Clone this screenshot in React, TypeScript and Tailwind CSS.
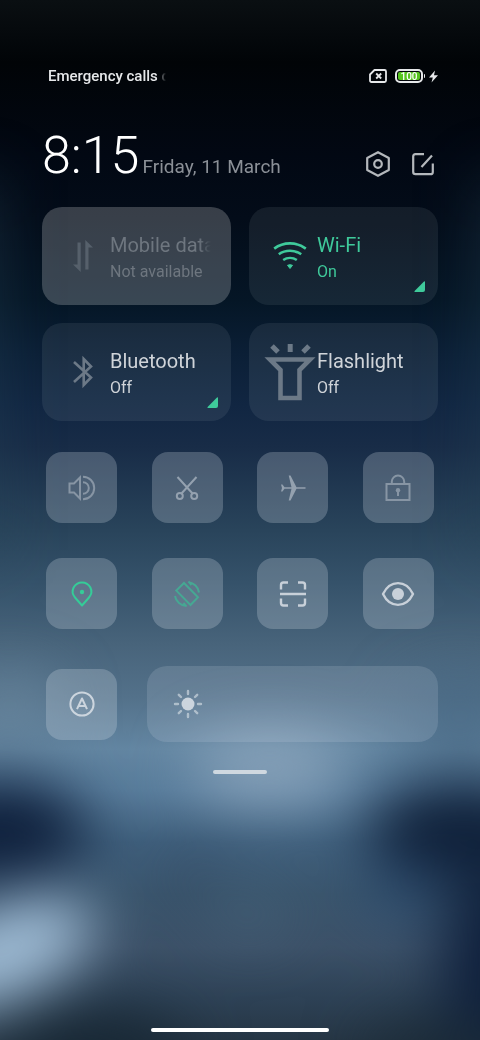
import type { ReactNode } from 'react';

function Wallpaper() {
  return (
    <svg
      className="absolute inset-0 -z-10 size-full"
      viewBox="0 0 480 1040"
      preserveAspectRatio="none"
      aria-hidden="true"
    >
      <defs>
        <linearGradient id="sky" x1="0" y1="0" x2="0" y2="1">
          <stop offset="0" stopColor="#0a0f12" />
          <stop offset="0.06" stopColor="#010407" />
          <stop offset="0.15" stopColor="#020813" />
          <stop offset="0.21" stopColor="#030c19" />
          <stop offset="0.29" stopColor="#051626" />
          <stop offset="0.34" stopColor="#0b1f36" />
          <stop offset="0.39" stopColor="#112642" />
          <stop offset="0.43" stopColor="#182c47" />
          <stop offset="0.51" stopColor="#29445b" />
          <stop offset="0.56" stopColor="#35526a" />
          <stop offset="0.62" stopColor="#48647b" />
          <stop offset="0.67" stopColor="#53718a" />
          <stop offset="0.72" stopColor="#6386a2" />
          <stop offset="0.76" stopColor="#587c9b" />
          <stop offset="0.81" stopColor="#3f5f7c" />
          <stop offset="0.86" stopColor="#3a556d" />
          <stop offset="0.91" stopColor="#3c5168" />
          <stop offset="0.96" stopColor="#2e4256" />
          <stop offset="1" stopColor="#263645" />
        </linearGradient>
        <filter id="soft" x="-100%" y="-100%" width="300%" height="300%" colorInterpolationFilters="sRGB">
          <feGaussianBlur stdDeviation="30" />
        </filter>
      </defs>
      <rect width="480" height="1040" fill="url(#sky)" />
      <g filter="url(#soft)">
        <rect x="-60" y="180" width="60" height="370" fill="#264558" opacity="0.45" />
        <rect x="480" y="180" width="60" height="370" fill="#264558" opacity="0.45" />
        <ellipse cx="10" cy="705" rx="50" ry="35" fill="#718ea3" opacity="0.6" />
        <ellipse cx="270" cy="768" rx="80" ry="36" fill="#98afc4" opacity="0.75" />
        <ellipse cx="460" cy="715" rx="60" ry="40" fill="#426480" opacity="0.6" />
        <ellipse cx="-5" cy="832" rx="92" ry="52" fill="#0e1f3b" />
        <ellipse cx="465" cy="832" rx="96" ry="50" fill="#0f2039" />
        <ellipse cx="500" cy="960" rx="60" ry="85" fill="#0f203c" />
        <ellipse cx="400" cy="895" rx="34" ry="26" fill="#2c4d74" opacity="0.8" />
        <ellipse cx="190" cy="875" rx="22" ry="20" fill="#2f4056" opacity="0.6" />
        <ellipse cx="250" cy="915" rx="40" ry="20" fill="#4a687d" opacity="0.6" />
        <ellipse cx="90" cy="1050" rx="100" ry="35" fill="#162633" />
        <ellipse cx="450" cy="1050" rx="90" ry="24" fill="#182835" />
        <ellipse cx="5" cy="952" rx="94" ry="46" fill="#a0bdd6" transform="rotate(-24 5 952)" />
      </g>
    </svg>
  );
}

function MobileDataIcon() {
  return (
    <svg width="20" height="32" viewBox="0 0 20 32" fill="currentColor" aria-hidden="true">
      <path d="M4.500 2.500h3.200V32L0 24.500h4.500zM15.500 29.500h-3.200V0L20 7.500h-4.500z" />
    </svg>
  );
}

function WifiIcon() {
  return (
    <svg width="34" height="30" viewBox="0 0 34 30" fill="none" stroke="currentColor" strokeWidth="2.600" aria-hidden="true">
      <path d="M1.200 7.600C10.500.6 23.500.6 32.800 7.600M5.800 13.300c6.600-4.700 15.800-4.700 22.400 0M10.200 19c4-2.600 9.600-2.600 13.600 0" />
      <path d="M14.500 24.300q2.500-1.300 5 0L17 27.500z" fill="currentColor" strokeWidth="1" />
    </svg>
  );
}

function BluetoothIcon() {
  return (
    <svg width="20" height="34" viewBox="0 0 20 34" fill="none" stroke="currentColor" strokeWidth="2.600" aria-hidden="true">
      <path d="M1 7l17 15.500-7.300 7.500V4L18 11.500 1 27" />
    </svg>
  );
}

function FlashlightIcon() {
  return (
    <svg width="52" height="58" viewBox="0 0 52 58" fill="none" stroke="currentColor" strokeWidth="4.600" aria-hidden="true">
      <path d="M6 16.500h40L35.500 27v28h-19V27z" />
      <path d="M26.200 1v8M8 3l6 6M45 3l-6 6" strokeWidth="5" />
    </svg>
  );
}

type TileProps = {
  title: string;
  status: string;
  icon: ReactNode;
  iconColor: string;
  textColor: string;
  background: string;
  expandable?: boolean;
  disabled?: boolean;
};

function Tile({ title, status, icon, iconColor, textColor, background, expandable, disabled }: TileProps) {
  return (
    <button
      type="button"
      disabled={disabled}
      className={`relative flex h-[98px] min-w-0 items-center rounded-[20px] pr-5 pl-[14px] text-left ${background}`}
    >
      <span className={`flex w-[54px] shrink-0 justify-center ${iconColor}`}>{icon}</span>
      <span className={`min-w-0 flex-1 pt-1 ${textColor}`}>
        <span className="block overflow-hidden text-xl leading-7 whitespace-nowrap [mask-image:linear-gradient(to_right,#000_88%,transparent)]">
          {title}
        </span>
        <span className="block text-base leading-[26px] whitespace-nowrap">{status}</span>
      </span>
      {expandable && (
        <svg className="absolute right-[13px] bottom-[13px] text-[#3fca9b]" width="11" height="11" viewBox="0 0 11 11" aria-hidden="true">
          <path d="M10 .4Q11 0 11 1v8q0 2-2 2H1q-1 0-.4-1z" fill="currentColor" />
        </svg>
      )}
    </button>
  );
}

function Toggle({ label, color, children }: { label: string; color: string; children: ReactNode }) {
  return (
    <button
      type="button"
      aria-label={label}
      className={`flex size-[71px] shrink-0 items-center justify-center rounded-2xl bg-[#dfe6f0]/24 ${color}`}
    >
      <svg width="34" height="34" viewBox="0 0 34 34" fill="none" stroke="currentColor" strokeWidth="2" aria-hidden="true">
        {children}
      </svg>
    </button>
  );
}

export default function App() {
  return (
    <main className="relative isolate flex min-h-screen flex-col overflow-hidden px-[42px] pt-16 font-[Roboto,sans-serif]">
      <Wallpaper />

      <header>
        <div className="flex h-6 items-center justify-between pl-[6px]">
          <span className="w-[118px] overflow-hidden text-[15px] leading-[26px] font-medium whitespace-nowrap text-[#e6e8ea] [mask-image:linear-gradient(to_right,#000_92%,transparent)]">
            Emergency calls only
          </span>
          <div className="flex items-center gap-2 text-[#e6e8ea]">
            <svg width="18" height="14" viewBox="0 0 18 14" fill="none" stroke="currentColor" strokeWidth="1.800" aria-label="No SIM card">
              <path d="M5.500 1H15.500Q17 1 17 2.500v9q0 1.500-1.500 1.500h-13Q1 13 1 11.500V5.500z" strokeLinejoin="round" />
              <path d="M7.200 4.500l5 5M12.200 4.500l-5 5" strokeWidth="1.800" />
            </svg>
            <div className="flex items-center">
              <div className="rounded-[5px] border-2 border-[#e6e8ea] p-px">
                <div className="h-2 w-[22px] rounded-xs bg-[#55c31e] text-center text-[10px] leading-[9px] font-medium text-white">100</div>
              </div>
              <div className="ml-px h-1 w-px rounded-r bg-[#e6e8ea]" />
              <svg className="ml-1" width="9" height="13" viewBox="0 0 9 12" fill="currentColor" aria-label="Charging">
                <path d="M6 0L0 6.900h3.800L2.500 12 9 4.800H5z" />
              </svg>
            </div>
          </div>
        </div>

        <div className="mt-[38px] flex h-[60px] items-end justify-between">
          <div className="flex items-baseline gap-[3px]">
            <time className="text-[52px] leading-[60px] font-light text-white">8:15</time>
            <span className="text-[19px] whitespace-nowrap text-[#8b9097]">Friday, 11 March</span>
          </div>
          <div className="flex items-center gap-[18px] pb-2 text-[#b4b8bc]">
            <button type="button" aria-label="Settings">
              <svg width="28" height="28" viewBox="0 0 28 28" fill="none" stroke="currentColor" strokeWidth="2.200" strokeLinejoin="round" aria-hidden="true">
                <path d="M14 2.200L24.800 8v12L14 25.800 3.200 20V8z" />
                <circle cx="14" cy="14" r="3.800" />
              </svg>
            </button>
            <button type="button" aria-label="Edit">
              <svg width="28" height="28" viewBox="0 0 28 28" fill="none" stroke="currentColor" strokeWidth="2.200" aria-hidden="true">
                <path d="M14 4.200H5.500Q3.200 4.200 3.200 6.500v15.500Q3.200 24.200 5.500 24.200h15q2.300 0 2.300-2.300V13.500M22 5.500L11.500 17" />
              </svg>
            </button>
          </div>
        </div>
      </header>

      <section aria-label="Connections" className="mt-[21px] grid grid-cols-2 gap-[18px]">
        <Tile
          title="Mobile data"
          status="Not available"
          icon={<MobileDataIcon />}
          iconColor="text-[#56606b]"
          textColor="text-[#6e767f]"
          background="bg-white/21"
          disabled
        />
        <Tile
          title="Wi-Fi"
          status="On"
          icon={<WifiIcon />}
          iconColor="text-[#3fca9b]"
          textColor="text-[#3fca9b]"
          background="bg-[#eaf2f6]/8"
          expandable
        />
        <Tile
          title="Bluetooth"
          status="Off"
          icon={<BluetoothIcon />}
          iconColor="text-[#6c7987]"
          textColor="text-[#d0d4d9]"
          background="bg-[#eaf2f6]/8"
          expandable
        />
        <Tile
          title="Flashlight"
          status="Off"
          icon={<FlashlightIcon />}
          iconColor="text-[#6c7987]"
          textColor="text-[#d0d4d9]"
          background="bg-[#eaf2f6]/8"
        />
      </section>

      <section aria-label="Toggles" className="mt-[31px] flex flex-col gap-[35px] px-1">
        <div className="flex justify-between">
          <Toggle label="Sound" color="text-[#8795a4]">
            <path d="M4.500 12.500h4.500L15 6.500v21L9 21.500H4.500z" />
            <path d="M18 5.800a11.200 11.200 0 0 1 0 22.400M18 11.200a5.800 5.800 0 0 1 0 11.600" />
          </Toggle>
          <Toggle label="Screenshot" color="text-[#94a1af]">
            <path d="M7.500 6L23 23M26.500 6L11 23" />
            <circle cx="9.800" cy="25" r="3" />
            <circle cx="24.200" cy="25" r="3" />
          </Toggle>
          <Toggle label="Aeroplane mode" color="text-[#94a1af]">
            <path
              d="M29.500 16.200v1.600H20.500L14.500 29.500h-1.800L15.500 17.800H8.500L6.500 20.500H5L6 17 5 13.500h1.500L8.500 16.200h7L12.700 4.500h1.800l6 11.700z"
              fill="currentColor"
              stroke="none"
            />
          </Toggle>
          <Toggle label="Lock screen" color="text-[#8795a4]">
            <path d="M5.500 13h23v16h-23zM10.800 13V10.800a6.200 6.200 0 0 1 12.400 0V13" />
            <circle cx="17" cy="19.200" r="2.200" fill="currentColor" stroke="none" />
            <path d="M17 19v6" />
          </Toggle>
        </div>
        <div className="flex justify-between">
          <Toggle label="Location" color="text-[#35cc98]">
            <path d="M17 28.500L10 20.500C4.500 14 9.500 5.500 17 5.500s12.500 8.500 7 15z" strokeLinejoin="round" />
            <circle cx="17" cy="15" r="2.200" fill="currentColor" stroke="none" />
          </Toggle>
          <Toggle label="Auto-rotate" color="text-[#46a893]">
            <path d="M14 6L28 20.200 20.500 28 6.300 13.600z" />
            <path d="M5 19A12 12 0 0 0 16.500 29M29 15.500A12 12 0 0 0 18.500 5.200M18.500 4.500l3 3.500M16.500 29.500l-3-3.500" />
          </Toggle>
          <Toggle label="Scan" color="text-[#c8d0d9]">
            <path
              d="M5 12.500V8q0-2.500 2.500-2.500H12M22 5.500h4.500Q29 5.500 29 8v4.500M29 21.500V26q0 2.500-2.500 2.500H22M12 28.500H7.500Q5 28.500 5 26v-4.500M4 17h26"
              strokeWidth="2.400"
            />
          </Toggle>
          <Toggle label="Reading mode" color="text-[#c8d0d9]">
            <path d="M2 17C9 2.500 25 2.500 32 17 25 31.500 9 31.500 2 17z" strokeWidth="2.400" strokeLinejoin="round" />
            <circle cx="17" cy="17" r="6" fill="currentColor" stroke="none" />
          </Toggle>
        </div>
      </section>

      <section aria-label="Brightness" className="mt-[37px] flex items-center gap-[30px] pl-1">
        <Toggle label="Automatic brightness" color="text-[#ccd5de]">
          <circle cx="17" cy="17" r="11.600" />
          <path d="M12 22.200L17 11.500 22 22.200M13.800 19h6.400" strokeLinejoin="round" />
        </Toggle>
        <label className="flex h-[76px] min-w-0 flex-1 items-center gap-4 rounded-[20px] bg-[#dfe6f0]/15 pr-5 pl-[26px] text-[#ccd5de]">
          <svg className="shrink-0" width="30" height="30" viewBox="0 0 30 30" fill="none" stroke="currentColor" strokeWidth="2.400" strokeLinecap="round" aria-hidden="true">
            <circle cx="15" cy="15" r="6.500" fill="currentColor" stroke="none" />
            <path
              d="M15 2v3M15 25v3M2 15h3M25 15h3M5.800 5.800L8 8M22 22l2.200 2.200M5.800 24.200L8 22M22 8l2.200-2.200"
              opacity="0.7"
            />
          </svg>
          <input
            type="range"
            aria-label="Brightness"
            min="0"
            max="100"
            defaultValue="0"
            className="h-10 min-w-0 flex-1 appearance-none bg-transparent [&::-webkit-slider-thumb]:opacity-0"
          />
        </label>
      </section>

      <div className="mt-7 h-1 w-[54px] self-center rounded-full bg-[#cfd8e0]" />
      <div className="mt-auto mb-2 h-1 w-[178px] self-center rounded-full bg-white" />
    </main>
  );
}
